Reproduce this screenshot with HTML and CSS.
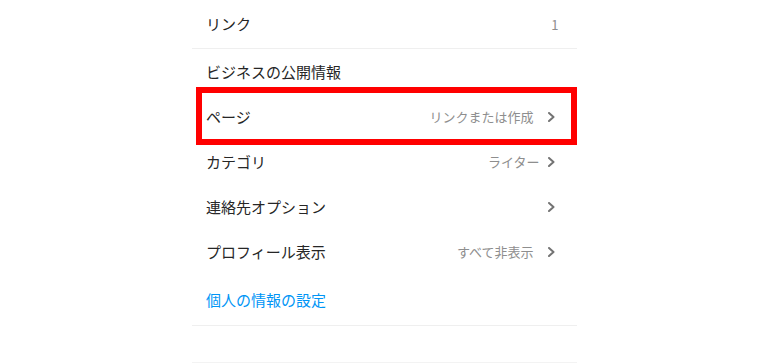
FILE: index.html
```html
<!DOCTYPE html>
<html lang="ja">
<head>
<meta charset="utf-8">
<link rel="stylesheet" href="styles.css">
</head>
<body>
<div class="panel">
  <div class="row row-first divider">
    <span class="label">リンク</span>
    <span class="count">1</span>
  </div>
  <div class="row">
    <span class="label">ビジネスの公開情報</span>
  </div>
  <div class="row highlighted">
    <span class="label">ページ</span>
    <span class="value">リンクまたは作成</span>
    <svg class="chev" width="7" height="10" viewBox="0 0 7 10"><polyline points="1,1 5.5,5 1,9" fill="none" stroke="#737373" stroke-width="2" stroke-linecap="round" stroke-linejoin="round"/></svg>
    <span class="mark"></span>
  </div>
  <div class="row">
    <span class="label">カテゴリ</span>
    <span class="value value-tight">ライター</span>
    <svg class="chev" width="7" height="10" viewBox="0 0 7 10"><polyline points="1,1 5.5,5 1,9" fill="none" stroke="#737373" stroke-width="2" stroke-linecap="round" stroke-linejoin="round"/></svg>
  </div>
  <div class="row">
    <span class="label">連絡先オプション</span>
    <svg class="chev" width="7" height="10" viewBox="0 0 7 10"><polyline points="1,1 5.5,5 1,9" fill="none" stroke="#737373" stroke-width="2" stroke-linecap="round" stroke-linejoin="round"/></svg>
  </div>
  <div class="row">
    <span class="label">プロフィール表示</span>
    <span class="value">すべて非表示</span>
    <svg class="chev" width="7" height="10" viewBox="0 0 7 10"><polyline points="1,1 5.5,5 1,9" fill="none" stroke="#737373" stroke-width="2" stroke-linecap="round" stroke-linejoin="round"/></svg>
  </div>
  <div class="row row-last divider">
    <span class="label link">個人の情報の設定</span>
  </div>
  <div class="next"></div>
</div>
</body>
</html>
```
FILE: styles.css
```css
html, body {
  margin: 0;
  padding: 0;
  background: #ffffff;
}
body {
  font-family: "Noto Sans CJK JP", "Noto Sans", sans-serif;
  color: #262626;
}
.panel {
  width: 385px;
  margin: 0 auto;
}
.row {
  position: relative;
  display: flex;
  align-items: center;
  height: 45px;
  padding: 0 18px 0 14.5px;
  box-sizing: border-box;
}
.row-first {
  height: 49px;
}
.row-last {
  height: 52px;
}
.divider {
  border-bottom: 1px solid #efefef;
}
.label {
  flex: 1;
  font-size: 15px;
  line-height: 20px;
  white-space: nowrap;
}
.link {
  color: #0095f6;
}
.count {
  font-size: 13px;
  color: #8e8e8e;
}
.value {
  font-size: 13px;
  color: #8e8e8e;
  margin-right: 14px;
  white-space: nowrap;
}
.value-tight {
  margin-right: 8px;
}
.chev {
  display: block;
  margin-right: 4px;
}
.mark {
  position: absolute;
  top: -7px;
  bottom: -6px;
  left: 4.5px;
  right: -0.5px;
  border: 6px solid #ff0000;
  pointer-events: none;
}
.next {
  height: 36px;
  border-bottom: 1px solid #f3f3f3;
}
```
